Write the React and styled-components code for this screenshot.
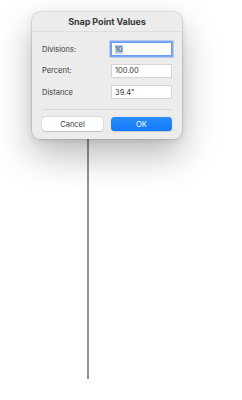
import React from "react";
import styled, { createGlobalStyle } from "styled-components";

const GlobalStyle = createGlobalStyle`
  html, body {
    margin: 0;
    padding: 0;
    background: #ffffff;
  }
  body {
    font-family: "Inter", "Liberation Sans", sans-serif;
    -webkit-font-smoothing: antialiased;
  }
`;

const Stage = styled.div`
  width: 242px;
  height: 400px;
  padding: 12px 0 0 32px;
  box-sizing: border-box;
  display: flex;
  flex-direction: column;
  align-items: flex-start;
`;

const Dialog = styled.div`
  width: 150px;
  background: #ececec;
  border-radius: 8px;
  box-shadow: 0 0 0 0.5px rgba(0, 0, 0, 0.18), 0 16px 36px rgba(0, 0, 0, 0.28),
    0 2px 6px rgba(0, 0, 0, 0.1);
  display: flex;
  flex-direction: column;
  position: relative;
  z-index: 1;
`;

const TitleBar = styled.div`
  height: 19px;
  display: flex;
  align-items: center;
  justify-content: center;
  border-bottom: 1px solid #dedede;
  font-size: 9px;
  font-weight: 700;
  color: #3a3a3a;
  letter-spacing: -0.1px;
`;

const Body = styled.div`
  padding: 10px 10px 8px 10px;
  display: flex;
  flex-direction: column;
`;

const Fields = styled.div`
  display: flex;
  flex-direction: column;
  gap: 7.5px;
`;

const Row = styled.div`
  display: flex;
  align-items: center;
  justify-content: space-between;
  height: 14px;
`;

const Label = styled.span`
  font-size: 7.5px;
  color: #3c3c3c;
`;

const Field = styled.div`
  width: 61px;
  height: 14px;
  box-sizing: border-box;
  background: #ffffff;
  border: 0.5px solid ${(p) => (p.$focused ? "#6b9ef0" : "#d4d4d4")};
  box-shadow: ${(p) =>
    p.$focused ? "0 0 0 1.5px rgba(90, 145, 240, 0.75)" : "none"};
  display: flex;
  align-items: center;
  padding-left: 3px;
  font-size: 7.5px;
  color: #3a3a3a;
`;

const Selected = styled.span`
  background: #b4d5fe;
  line-height: 9px;
`;

const Divider = styled.div`
  height: 1px;
  background: #d9d9d9;
  margin: 10px 0 7px 0;
`;

const Buttons = styled.div`
  display: flex;
  justify-content: space-between;
`;

const Button = styled.div`
  width: 61px;
  height: 14px;
  border-radius: 3.5px;
  display: flex;
  align-items: center;
  justify-content: center;
  font-size: 7.5px;
  color: ${(p) => (p.$primary ? "#ffffff" : "#3a3a3a")};
  background: ${(p) =>
    p.$primary ? "linear-gradient(#2a8dfc, #1579f8)" : "#ffffff"};
  box-shadow: ${(p) =>
    p.$primary
      ? "0 0.5px 1px rgba(0, 0, 0, 0.15)"
      : "0 0 0 0.5px rgba(0, 0, 0, 0.1), 0 0.5px 1px rgba(0, 0, 0, 0.15)"};
`;

const Stem = styled.div`
  width: 1.5px;
  height: 240px;
  margin-left: 55px;
  background: #939393;
`;

const fields = [
  { label: "Divisions:", value: "10", focused: true },
  { label: "Percent:", value: "100.00" },
  { label: "Distance", value: "39.4\"" },
];

export default function App() {
  return (
    <>
      <GlobalStyle />
      <Stage>
        <Dialog>
          <TitleBar>Snap Point Values</TitleBar>
          <Body>
            <Fields>
              {fields.map((f) => (
                <Row key={f.label}>
                  <Label>{f.label}</Label>
                  <Field $focused={f.focused}>
                    {f.focused ? <Selected>{f.value}</Selected> : f.value}
                  </Field>
                </Row>
              ))}
            </Fields>
            <Divider />
            <Buttons>
              <Button>Cancel</Button>
              <Button $primary>OK</Button>
            </Buttons>
          </Body>
        </Dialog>
        <Stem />
      </Stage>
    </>
  );
}
